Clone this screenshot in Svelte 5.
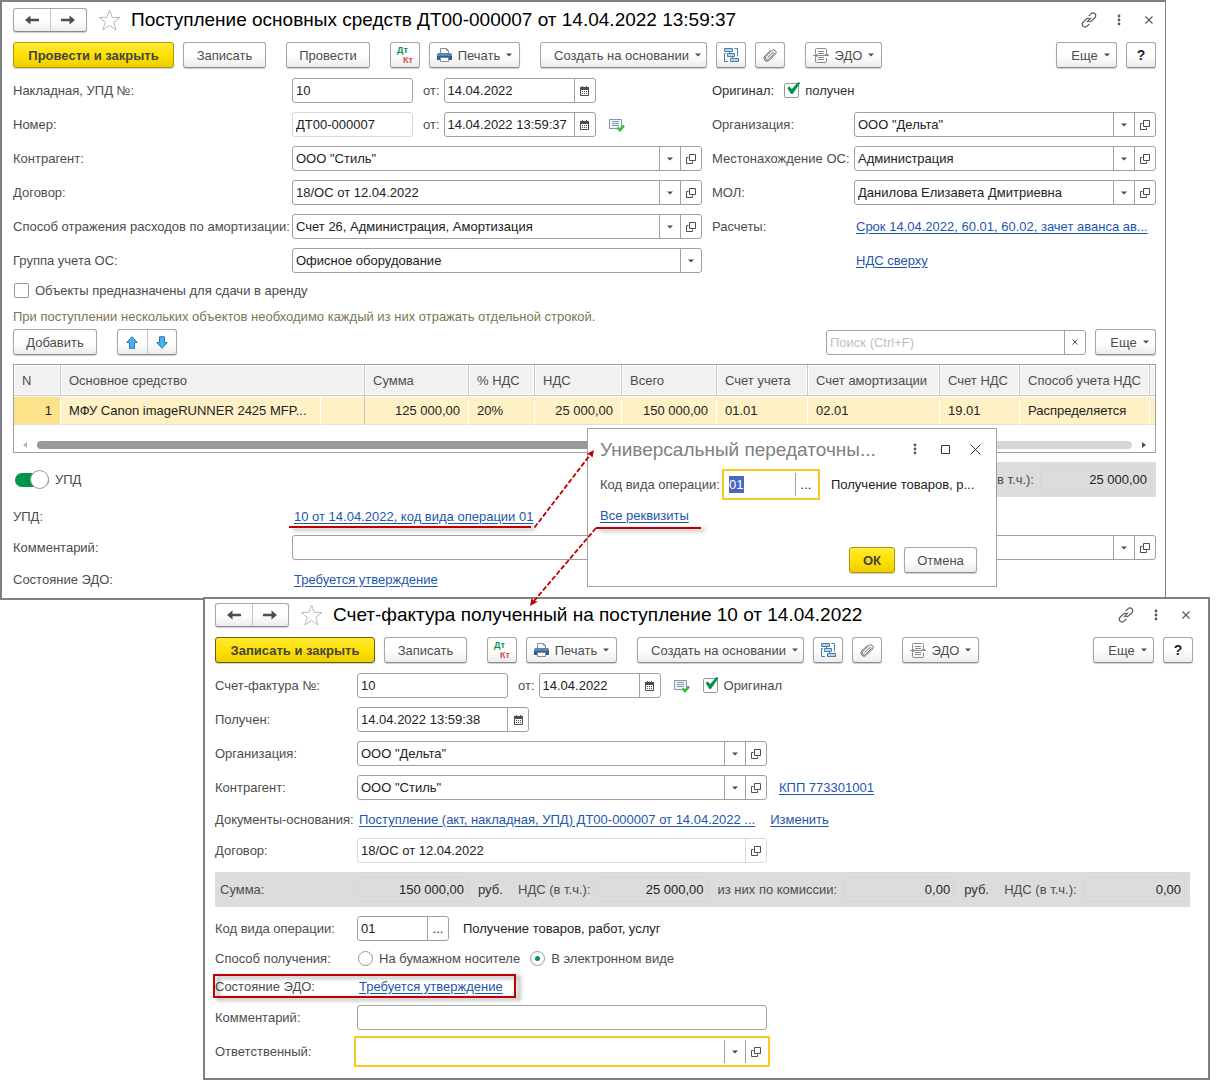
<script>
	const columns = [
		{ title: 'N', span: 1 },
		{ title: 'Основное средство', span: 2 },
		{ title: 'Сумма', span: 1 },
		{ title: '% НДС', span: 1 },
		{ title: 'НДС', span: 1 },
		{ title: 'Всего', span: 1 },
		{ title: 'Счет учета', span: 1 },
		{ title: 'Счет амортизации', span: 1 },
		{ title: 'Счет НДС', span: 1 },
		{ title: 'Способ учета НДС', span: 1 },
		{ title: '', span: 1 }
	];

	const rows = [
		[
			{ text: '1', kind: 'num current' },
			{ text: 'МФУ Canon imageRUNNER 2425 MFP...' },
			{ text: '', kind: 'fixed' },
			{ text: '125 000,00', kind: 'num' },
			{ text: '20%' },
			{ text: '25 000,00', kind: 'num' },
			{ text: '150 000,00', kind: 'num' },
			{ text: '01.01' },
			{ text: '02.01' },
			{ text: '19.01' },
			{ text: 'Распределяется' },
			{ text: '' }
		]
	];

	let comment = $state('');
	let invoiceComment = $state('');
	let responsible = $state('');
	let search = $state('');
	let received = $state(true);
	let original = $state(true);
	let forRent = $state(false);
	let upd = $state(true);
	let delivery = $state('electronic');
</script>

{#snippet caret()}
	<svg class="caret" width="6" height="4" viewBox="0 0 6 4" aria-hidden="true">
		<path d="M0 0.5h6L3 3.5z" fill="#4d4d4d" />
	</svg>
{/snippet}

{#snippet openIcon()}
	<svg width="10" height="10" viewBox="0 0 10 10" fill="none" stroke="#4d4d4d" aria-hidden="true">
		<path d="M3.5 0.5h6v6h-6z" />
		<path d="M2.5 3.5h-2v6h6v-2" />
	</svg>
{/snippet}

{#snippet calendarIcon()}
	<svg width="9" height="10" viewBox="0 0 9 10" aria-hidden="true">
		<path d="M0.5 2.5h8v7h-8z" fill="#fff" stroke="#4d4d4d" />
		<path d="M0 1h9v3H0z" fill="#4d4d4d" />
		<path d="M2 0h1v2H2zM6 0h1v2H6z" fill="#4d4d4d" />
		<path d="M2 5.5h6M2 7.5h6" stroke="#4d4d4d" stroke-dasharray="1 1" />
	</svg>
{/snippet}

{#snippet checkedDoc()}
	<svg class="doc-ok" width="16" height="14" viewBox="0 0 16 14" aria-hidden="true">
		<path d="M0.5 1.5h12v9H0.5z" fill="#f4f7fa" stroke="#8296ab" />
		<path d="M3 3.5h7M3 5.5h7M3 7.5h7" stroke="#8296ab" />
		<path d="M8.5 9.5l2.5 2.5 4-4.5" fill="none" stroke="#2fc13a" stroke-width="2.6" />
	</svg>
{/snippet}

{#snippet titleBar(text)}
	<header class="title-bar">
		<div class="pair nav">
			<button type="button" aria-label="Назад">
				<svg width="14" height="10" viewBox="0 0 14 10" aria-hidden="true">
					<path d="M0 5l5.5-4.5v3.3H14v2.4H5.5v3.3z" fill="#4d4d4d" />
				</svg>
			</button>
			<button type="button" aria-label="Вперед">
				<svg width="14" height="10" viewBox="0 0 14 10" aria-hidden="true">
					<path d="M14 5L8.5 0.5v3.3H0v2.4h8.5v3.3z" fill="#4d4d4d" />
				</svg>
			</button>
		</div>
		<button type="button" class="plain star" aria-label="В избранное">
			<svg width="23" height="22" viewBox="0 0 23 22" aria-hidden="true">
				<path d="M11.5 1l2.7 7.4h7.8l-6.2 4.9 2.3 7.7-6.6-4.6-6.6 4.6 2.3-7.7L1 8.4h7.8z" fill="none" stroke="#b4bac0" />
			</svg>
		</button>
		<h1>{text}</h1>
		<button type="button" class="plain" aria-label="Ссылка">
			<svg width="16" height="16" viewBox="0 0 16 16" fill="none" stroke="#5a5a5a" stroke-width="1.2" aria-hidden="true">
				<path d="M7.5 4.2l2.4-2.4a2.7 2.7 0 0 1 4 0 2.7 2.7 0 0 1 0 4L11 8.7a2.7 2.7 0 0 1-3.5.3" />
				<path d="M8.5 11.8l-2.4 2.4a2.7 2.7 0 0 1-4 0 2.7 2.7 0 0 1 0-4L5 7.3A2.7 2.7 0 0 1 8.5 7" />
				<path d="M5.8 10.2l4.4-4.4" />
			</svg>
		</button>
		<button type="button" class="plain" aria-label="Меню">
			<svg width="4" height="12" viewBox="0 0 4 12" fill="#5a5a5a" aria-hidden="true">
				<circle cx="2" cy="2" r="1.4" /><circle cx="2" cy="6" r="1.4" /><circle cx="2" cy="10" r="1.4" />
			</svg>
		</button>
		<button type="button" class="plain" aria-label="Закрыть">
			<svg width="8" height="8" viewBox="0 0 8 8" stroke="#5a5a5a" stroke-width="1.2" aria-hidden="true">
				<path d="M0.5 0.5l7 7M7.5 0.5l-7 7" />
			</svg>
		</button>
	</header>
{/snippet}

{#snippet commonTools()}
	<div class="group">
		<button type="button" class="btn icon" aria-label="Движения документа">
			<span class="dtkt"><b class="dt">Дт</b><b class="kt">Кт</b></span>
		</button>
		<button type="button" class="btn print">
			<svg width="15" height="14" viewBox="0 0 15 14" aria-hidden="true">
				<path d="M3.5 5.5v-5h6l2 2v3" fill="#fff" stroke="#7a8fa3" />
				<path d="M9.5 0.5v2h2" fill="none" stroke="#7a8fa3" />
				<path d="M1.5 5h12A1.5 1.5 0 0 1 15 6.5V11a1 1 0 0 1-1 1H1a1 1 0 0 1-1-1V6.5A1.5 1.5 0 0 1 1.5 5z" fill="#5b89b0" />
				<path d="M0 8h15v3a1 1 0 0 1-1 1H1a1 1 0 0 1-1-1z" fill="#2e5f8c" />
				<path d="M3.5 9.5h8v4h-8z" fill="#fff" stroke="#7a8fa3" />
			</svg>
			<span>Печать</span>
			{@render caret()}
		</button>
	</div>
	<div class="group">
		<button type="button" class="btn base">
			<span>Создать на основании</span>
			{@render caret()}
		</button>
		<button type="button" class="btn icon" aria-label="Структура подчиненности">
			<svg width="15" height="15" viewBox="0 0 15 15" aria-hidden="true">
				<g fill="#b9d2e6" stroke="#4580ad">
					<path d="M0.5 0.5h8v3h-8zM3.5 5.5h7v3h-7zM6.5 10.5h8v3h-8z" />
				</g>
				<path d="M10.5 0.5h3V8.5M4 13.5H0.5V5.5H2M5.5 3.5v2M8.5 8.5v2" fill="none" stroke="#4580ad" />
			</svg>
		</button>
		<button type="button" class="btn icon" aria-label="Присоединенные файлы">
			<svg width="14" height="14" viewBox="0 0 14 14" fill="none" stroke="#6a6a6a" aria-hidden="true">
				<path d="M4.5 9.8l5-5a0.9 0.9 0 0 1 1.3 1.3L5.6 11.3a1.9 1.9 0 0 1-2.8-2.7L8.8 2.6a2.5 2.5 0 0 1 3.6 3.6l-6 6a3 3 0 0 1-4.5 0 3 3 0 0 1 0-4.3L7.5 2.2" />
			</svg>
		</button>
	</div>
	<button type="button" class="btn edo">
		<svg width="16" height="15" viewBox="0 0 16 15" fill="none" stroke="#8a8a8a" aria-hidden="true">
			<path d="M2.5 5V1.5a1 1 0 0 1 1-1h9a1 1 0 0 1 1 1V5M2.5 10v3.5a1 1 0 0 0 1 1h9a1 1 0 0 0 1-1V10" />
			<path d="M5 3.5h6M5 5.5h6M5 9.5h6M5 11.5h6" />
			<path d="M0 7.5h16" />
			<path d="M2 5l3.5 2.5L2 10zM16 7.5h-5l2.5-2.5z" fill="#8a8a8a" stroke="none" />
		</svg>
		<span>ЭДО</span>
		{@render caret()}
	</button>
	<div class="group end">
		<button type="button" class="btn more"><span>Еще</span>{@render caret()}</button>
		<button type="button" class="btn icon help" aria-label="Справка">?</button>
	</div>
{/snippet}

{#snippet combo(id, label, value, open = true)}
	<div class="row">
		<label for={id}>{label}</label>
		<div class="field grow">
			<select {id}><option>{value}</option></select>
			<span class="seg">{@render caret()}</span>
			{#if open}
				<button type="button" class="seg" aria-label="Открыть">{@render openIcon()}</button>
			{/if}
		</div>
	</div>
{/snippet}

{#snippet dateField(id, value, size)}
	<div class="field {size}">
		<input {id} type="text" {value} />
		<button type="button" class="seg" aria-label="Календарь">{@render calendarIcon()}</button>
	</div>
{/snippet}

<div class="desktop">
	<main class="window receipt">
		{@render titleBar('Поступление основных средств ДТ00-000007 от 14.04.2022 13:59:37')}

		<div class="toolbar">
			<div class="group">
				<button type="button" class="btn primary">Провести и закрыть</button>
				<button type="button" class="btn save">Записать</button>
			</div>
			<button type="button" class="btn post">Провести</button>
			{@render commonTools()}
		</div>

		<div class="columns">
			<div class="stack">
				<div class="row">
					<label for="waybill">Накладная, УПД №:</label>
					<div class="field number"><input id="waybill" type="text" value="10" /></div>
					<label class="from" for="waybill-date">от:</label>
					{@render dateField('waybill-date', '14.04.2022', 'datetime')}
				</div>
				<div class="row">
					<label for="doc-number">Номер:</label>
					<div class="field number readonly">
						<input id="doc-number" type="text" value="ДТ00-000007" readonly />
					</div>
					<label class="from" for="doc-date">от:</label>
					{@render dateField('doc-date', '14.04.2022 13:59:37', 'datetime')}
					{@render checkedDoc()}
				</div>
				{@render combo('partner', 'Контрагент:', 'ООО "Стиль"')}
				{@render combo('contract', 'Договор:', '18/ОС от 12.04.2022')}
				{@render combo('expense', 'Способ отражения расходов по амортизации:', 'Счет 26, Администрация, Амортизация')}
				{@render combo('asset-group', 'Группа учета ОС:', 'Офисное оборудование', false)}
			</div>

			<div class="stack right">
				<div class="row dark">
					<span>Оригинал:</span>
					<label class="check">
						<input type="checkbox" bind:checked={received} />получен
					</label>
				</div>
				{@render combo('org', 'Организация:', 'ООО "Дельта"')}
				{@render combo('place', 'Местонахождение ОС:', 'Администрация')}
				{@render combo('mol', 'МОЛ:', 'Данилова Елизавета Дмитриевна')}
				<div class="row">
					<span class="label">Расчеты:</span>
					<a href="#payments">Срок 14.04.2022, 60.01, 60.02, зачет аванса ав...</a>
				</div>
				<div class="row">
					<span class="label"></span>
					<a href="#vat">НДС сверху</a>
				</div>
			</div>
		</div>

		<label class="check line">
			<input type="checkbox" bind:checked={forRent} />Объекты предназначены для сдачи в аренду
		</label>
		<p class="hint">При поступлении нескольких объектов необходимо каждый из них отражать отдельной строкой.</p>

		<div class="commands">
			<button type="button" class="btn post">Добавить</button>
			<div class="pair order">
				<button type="button" aria-label="Вверх">
					<svg width="12" height="13" viewBox="0 0 12 13" aria-hidden="true">
						<path d="M6 0.7l5.3 5.8H8.5v5.8h-5V6.5H0.7z" fill="#45b1f0" stroke="#2b7db0" />
					</svg>
				</button>
				<button type="button" aria-label="Вниз">
					<svg width="12" height="13" viewBox="0 0 12 13" aria-hidden="true">
						<path d="M6 12.3l5.3-5.8H8.5V0.7h-5v5.8H0.7z" fill="#45b1f0" stroke="#2b7db0" />
					</svg>
				</button>
			</div>
			<div class="field search">
				<input type="text" placeholder="Поиск (Ctrl+F)" aria-label="Поиск" bind:value={search} />
				<button type="button" class="seg" aria-label="Очистить">
					<svg width="6" height="6" viewBox="0 0 6 6" stroke="#4d4d4d" aria-hidden="true">
						<path d="M0.5 0.5l5 5M5.5 0.5l-5 5" />
					</svg>
				</button>
			</div>
			<button type="button" class="btn more"><span>Еще</span>{@render caret()}</button>
		</div>

		<div class="grid">
			<table>
				<colgroup>
					<col class="w-n" /><col /><col class="w-sub" /><col class="w-sum" /><col class="w-rate" />
					<col class="w-vat" /><col class="w-total" /><col class="w-acc" /><col class="w-amort" />
					<col class="w-vatacc" /><col class="w-mode" /><col class="w-rest" />
				</colgroup>
				<thead>
					<tr>
						{#each columns as column}
							<th colspan={column.span}>{column.title}</th>
						{/each}
					</tr>
				</thead>
				<tbody>
					{#each rows as row}
						<tr>
							{#each row as cell}
								<td class={cell.kind}>{cell.text}</td>
							{/each}
						</tr>
					{/each}
				</tbody>
			</table>
			<div class="scroll">
				<svg width="4" height="6" viewBox="0 0 4 6" aria-hidden="true"><path d="M4 0v6L0 3z" fill="#b4b4b4" /></svg>
				<div class="track"><div class="thumb"></div></div>
				<svg width="4" height="6" viewBox="0 0 4 6" aria-hidden="true"><path d="M0 0v6l4-3z" fill="#4d4d4d" /></svg>
			</div>
		</div>

		<div class="summary">
			<label class="switch"><input type="checkbox" role="switch" bind:checked={upd} />УПД</label>
			<div class="band">
				<div class="total">
					<label for="vat-total">(в т.ч.):</label>
					<input id="vat-total" type="text" value="25 000,00" readonly />
				</div>
			</div>
		</div>

		<div class="stack">
			<div class="row link">
				<span class="label">УПД:</span>
				<a href="#upd">10 от 14.04.2022, код вида операции 01</a>
			</div>
			<div class="row">
				<label for="comment">Комментарий:</label>
				<div class="field grow">
					<input id="comment" type="text" bind:value={comment} />
					<button type="button" class="seg" aria-label="Выбрать">{@render caret()}</button>
					<button type="button" class="seg" aria-label="Открыть">{@render openIcon()}</button>
				</div>
			</div>
			<div class="row link">
				<span class="label">Состояние ЭДО:</span>
				<a href="#edo">Требуется утверждение</a>
			</div>
		</div>
	</main>

	<section class="window invoice">
		{@render titleBar('Счет-фактура полученный на поступление 10 от 14.04.2022')}

		<div class="toolbar">
			<div class="group">
				<button type="button" class="btn primary active">Записать и закрыть</button>
				<button type="button" class="btn save">Записать</button>
			</div>
			{@render commonTools()}
		</div>

		<div class="stack">
			<div class="row">
				<label for="invoice">Счет-фактура №:</label>
				<div class="field long"><input id="invoice" type="text" value="10" /></div>
				<label class="from" for="invoice-date">от:</label>
				{@render dateField('invoice-date', '14.04.2022', 'date')}
				{@render checkedDoc()}
				<label class="check original">
					<input type="checkbox" bind:checked={original} />Оригинал
				</label>
			</div>
			<div class="row">
				<label for="received-date">Получен:</label>
				{@render dateField('received-date', '14.04.2022 13:59:38', 'stamp')}
			</div>
			{@render combo('inv-org', 'Организация:', 'ООО "Дельта"')}
			<div class="with-link">
				{@render combo('inv-partner', 'Контрагент:', 'ООО "Стиль"')}
				<a href="#kpp">КПП 773301001</a>
			</div>
			<div class="row link">
				<span class="label">Документы-основания:</span>
				<a class="basis" href="#basis">Поступление (акт, накладная, УПД) ДТ00-000007 от 14.04.2022 ...</a>
				<a href="#change">Изменить</a>
			</div>
			<div class="row">
				<label for="inv-contract">Договор:</label>
				<div class="field grow readonly">
					<input id="inv-contract" type="text" value="18/ОС от 12.04.2022" readonly />
					<button type="button" class="seg" aria-label="Открыть">{@render openIcon()}</button>
				</div>
			</div>
			<div class="band totals">
				<div class="total first">
					<label for="sum">Сумма:</label>
					<input id="sum" type="text" value="150 000,00" readonly />
				</div>
				<span class="unit">руб.</span>
				<div class="total">
					<label for="sum-vat">НДС (в т.ч.):</label>
					<input id="sum-vat" type="text" value="25 000,00" readonly />
				</div>
				<div class="total">
					<label for="commission">из них по комиссии:</label>
					<input id="commission" type="text" value="0,00" readonly />
				</div>
				<span class="unit">руб.</span>
				<div class="total last">
					<label for="commission-vat">НДС (в т.ч.):</label>
					<input id="commission-vat" type="text" value="0,00" readonly />
				</div>
			</div>
			<div class="row">
				<label for="inv-code">Код вида операции:</label>
				<div class="field code">
					<input id="inv-code" type="text" value="01" />
					<button type="button" class="seg" aria-label="Выбрать код">...</button>
				</div>
				<span class="note">Получение товаров, работ, услуг</span>
			</div>
			<div class="row radios" role="radiogroup" aria-label="Способ получения">
				<span class="label">Способ получения:</span>
				<label class="check"><input type="radio" value="paper" bind:group={delivery} />На бумажном носителе</label>
				<label class="check"><input type="radio" value="electronic" bind:group={delivery} />В электронном виде</label>
			</div>
			<div class="row link">
				<span class="label">Состояние ЭДО:</span>
				<a href="#inv-edo">Требуется утверждение</a>
			</div>
			<div class="row">
				<label for="inv-comment">Комментарий:</label>
				<div class="field grow"><input id="inv-comment" type="text" bind:value={invoiceComment} /></div>
			</div>
			<div class="row">
				<label for="responsible">Ответственный:</label>
				<div class="field grow focused">
					<input id="responsible" type="text" bind:value={responsible} />
					<button type="button" class="seg" aria-label="Выбрать">{@render caret()}</button>
					<button type="button" class="seg" aria-label="Открыть">{@render openIcon()}</button>
				</div>
			</div>
		</div>
	</section>

	<section class="dialog" role="dialog" aria-labelledby="dialog-title">
		<header>
			<h2 id="dialog-title">Универсальный передаточны...</h2>
			<button type="button" class="plain" aria-label="Меню">
				<svg width="4" height="12" viewBox="0 0 4 12" fill="#5a5a5a" aria-hidden="true">
					<circle cx="2" cy="2" r="1.4" /><circle cx="2" cy="6" r="1.4" /><circle cx="2" cy="10" r="1.4" />
				</svg>
			</button>
			<button type="button" class="plain" aria-label="Развернуть">
				<svg width="9" height="9" viewBox="0 0 9 9" aria-hidden="true">
					<path d="M0.5 0.5h8v8h-8z" fill="none" stroke="#333" />
				</svg>
			</button>
			<button type="button" class="plain" aria-label="Закрыть">
				<svg width="11" height="11" viewBox="0 0 11 11" stroke="#333" aria-hidden="true">
					<path d="M0.5 0.5l10 10M10.5 0.5l-10 10" />
				</svg>
			</button>
		</header>
		<div class="row">
			<label for="code">Код вида операции:</label>
			<div class="field code focused">
				<span class="picked"><input id="code" type="text" value="01" /></span>
				<button type="button" class="seg" aria-label="Выбрать код">...</button>
			</div>
			<span class="note">Получение товаров, р...</span>
		</div>
		<a href="#all">Все реквизиты</a>
		<footer>
			<button type="button" class="btn primary ok">ОК</button>
			<button type="button" class="btn cancel">Отмена</button>
		</footer>
	</section>

	<!-- callouts linking the three windows -->
	<svg class="callouts" width="720" height="1010" viewBox="0 0 720 1010" aria-hidden="true">
		<defs>
			<filter id="shade" x="-10%" y="-300%" width="120%" height="800%">
				<feDropShadow dx="4" dy="2" stdDeviation="2" flood-opacity="0.4" />
			</filter>
			<filter id="box-shade" x="-5%" y="-30%" width="112%" height="170%">
				<feDropShadow dx="4" dy="2" stdDeviation="2" flood-opacity="0.45" />
			</filter>
		</defs>
		<g fill="#c00000">
			<path d="M289 526h242v2H289z" filter="url(#shade)" />
			<path d="M596 527h105v2H596z" filter="url(#shade)" />
			<path d="M594 450l-1.5 7.5-2.5-2.5-3.5-1z" />
			<path d="M530 606l1.5-8 2.5 3 4 .5z" />
		</g>
		<g fill="none" stroke="#c00000" stroke-width="1.8" stroke-dasharray="5 2">
			<path d="M534.5 527.5L590 455" />
			<path d="M596 528L534 601" />
		</g>
		<path d="M214 975h301v22H214z" fill="none" stroke="#c00000" stroke-width="2" filter="url(#box-shade)" />
	</svg>
</div>

<style>
	:global(body) {
		margin: 0;
		background: #fff;
	}

	.desktop {
		position: relative;
		font-family: 'Liberation Sans', Arial, sans-serif;
		font-size: 13px;
		line-height: 17px;
		color: #4d4d4d;
	}

	.desktop :is(button, input, select) {
		box-sizing: border-box;
		margin: 0;
		font: inherit;
		color: inherit;
	}

	.window {
		border: 2px solid #808080;
		background: #fff;
	}

	.receipt {
		margin-right: 52px;
		padding: 6px 9px 9px 11px;
		border-right-width: 1px;
	}

	.invoice {
		position: relative;
		margin: -3px 8px 0 203px;
		padding: 4px 15px 14px 10px;
	}

	a {
		color: #1d56ae;
		text-decoration: underline;
		text-underline-offset: 2px;
		white-space: nowrap;
	}

	/* title bar */
	.title-bar {
		display: flex;
		align-items: center;
		height: 24px;
		margin-bottom: 10px;
	}

	h1 {
		flex: 1;
		margin: 0 0 0 10px;
		font-size: 19px;
		font-weight: normal;
		line-height: 24px;
		color: #000;
		white-space: nowrap;
	}

	.plain {
		display: flex;
		align-items: center;
		justify-content: center;
		width: 30px;
		height: 24px;
		padding: 0;
		border: 0;
		background: none;
	}

	.title-bar .plain:last-child {
		margin-right: -8px;
	}

	.title-bar .star {
		width: 24px;
		margin-left: 10px;
	}

	.pair {
		display: flex;
		border: 1px solid #a6a6a6;
		border-bottom-color: #8c8c8c;
		border-radius: 3px;
		background: linear-gradient(#fff 50%, #ececec);
		box-shadow: 0 1px 1px #ccc;
	}

	.pair button {
		display: flex;
		flex: 1;
		align-items: center;
		justify-content: center;
		padding: 0;
		border: 0;
		background: none;
	}

	.pair button + button {
		border-left: 1px solid #c4c4c4;
	}

	.nav {
		width: 72px;
		height: 22px;
	}

	.order {
		width: 58px;
		height: 24px;
		margin-left: 20px;
	}

	/* buttons */
	.toolbar {
		display: flex;
		gap: 20px;
		margin-bottom: 10px;
	}

	.group {
		display: flex;
		gap: 9px;
	}

	.end {
		margin-left: auto;
	}

	.btn {
		display: flex;
		flex: none;
		align-items: center;
		justify-content: center;
		gap: 6px;
		height: 26px;
		padding: 0;
		border: 1px solid #a6a6a6;
		border-bottom-color: #8c8c8c;
		border-radius: 3px;
		background: linear-gradient(#fff 50%, #ececec);
		box-shadow: 0 1px 1px #ccc;
		white-space: nowrap;
	}

	.desktop .primary {
		width: 161px;
		border-color: #ad9a00;
		background: linear-gradient(#ffea3d, #ffe000 50%, #edcf00);
		font-weight: bold;
		color: #444;
	}

	.desktop .active {
		width: 160px;
		border-color: #6e6200;
	}

	.save {
		width: 83px;
	}

	.post {
		width: 84px;
	}

	.icon {
		width: 30px;
	}

	.print {
		width: 91px;
	}

	.base {
		width: 167px;
		padding-left: 8px;
	}

	.edo {
		width: 77px;
	}

	.more {
		width: 61px;
		padding-left: 8px;
	}

	.desktop .help {
		font-size: 14px;
		font-weight: bold;
		color: #222;
	}

	.dtkt {
		display: flex;
		flex-direction: column;
		width: 16px;
		font-size: 9px;
		line-height: 10px;
	}

	.dt {
		align-self: flex-start;
		color: #009646;
	}

	.kt {
		align-self: flex-end;
		color: #e04848;
	}

	/* form */
	.columns {
		display: grid;
		grid-template-columns: minmax(0, 689fr) minmax(0, 444fr);
		gap: 10px;
	}

	.stack {
		display: flex;
		flex-direction: column;
		gap: 9px;
	}

	.row {
		display: flex;
		align-items: center;
		height: 25px;
		white-space: nowrap;
	}

	.row.link {
		height: 20px;
	}

	.row > :is(label, .label):first-child {
		flex: none;
		width: 279px;
	}

	.right .row > :is(label, .label):first-child,
	.invoice .row > :is(label, .label):first-child {
		width: 142px;
	}

	.row > a {
		margin-left: 2px;
	}

	.row .from {
		margin: 0 4px 0 10px;
	}

	.dark {
		gap: 10px;
		color: #333;
	}

	.field {
		display: flex;
		box-sizing: border-box;
		height: 25px;
		border: 1px solid #a0a0a0;
		border-radius: 3px;
		background: #fff;
		color: #222;
	}

	.grow {
		flex: 1;
		min-width: 0;
	}

	.field :is(input, select) {
		flex: 1;
		min-width: 0;
		width: 100%;
		padding: 0 3px;
		border: 0;
		outline: 0;
		background: none;
		appearance: none;
	}

	.seg {
		display: flex;
		flex: none;
		box-sizing: border-box;
		align-items: center;
		justify-content: center;
		width: 21px;
		padding: 0;
		border: 0;
		border-left: 1px solid #a0a0a0;
		background: none;
	}

	.readonly {
		border-color: #d9d9d9;
	}

	.readonly .seg {
		border-color: #d9d9d9;
	}

	.focused {
		border-color: #fff;
		outline: 2px solid #fbca1c;
		outline-offset: 1px;
		border-radius: 0;
	}

	.number {
		width: 121px;
	}

	.datetime {
		width: 152px;
	}

	.date {
		width: 122px;
	}

	.long {
		width: 151px;
	}

	.stamp {
		width: 172px;
	}

	.code {
		width: 92px;
	}

	.note {
		margin-left: 14px;
		color: #222;
	}

	.doc-ok {
		margin-left: 13px;
	}

	.check {
		display: flex;
		align-items: center;
		gap: 6px;
	}

	.check input {
		position: relative;
		width: 15px;
		height: 15px;
		border: 1px solid #999;
		border-radius: 2px;
		background: #fff;
		appearance: none;
	}

	.check input[type='checkbox']:checked::after {
		content: '';
		position: absolute;
		top: -2px;
		left: 2px;
		width: 13px;
		height: 12px;
		background: #009646;
		clip-path: polygon(0 50%, 16% 38%, 36% 58%, 84% 0, 100% 8%, 42% 100%, 30% 100%);
	}

	.check input[type='radio'] {
		border-radius: 50%;
	}

	.check input[type='radio']:checked {
		background: radial-gradient(circle, #009646 2px, #fff 3px);
	}

	.original {
		margin-left: 13px;
	}

	.line {
		height: 17px;
		margin: 9px 0;
		padding-left: 1px;
	}

	.hint {
		margin: 0 0 4px;
		color: #7b7650;
	}

	.commands {
		display: flex;
		align-items: center;
		margin-bottom: 9px;
	}

	.search {
		width: 260px;
		margin: 0 9px 0 auto;
	}

	.search input::placeholder {
		color: #bfbfbf;
	}

	/* table */
	.grid {
		border: 1px solid #a0a0a0;
	}

	table {
		width: 100%;
		border-collapse: separate;
		border-spacing: 0;
		table-layout: fixed;
	}

	th,
	td {
		box-sizing: border-box;
		padding: 0 8px;
		overflow: hidden;
		white-space: nowrap;
		text-align: left;
	}

	th {
		height: 31px;
		padding-right: 0;
		border-right: 1px solid #c6c6c6;
		border-bottom: 1px solid #c6c6c6;
		background: #f1f1f1;
		font-weight: normal;
		box-shadow: inset 0 0 0 1px #fff;
	}

	td {
		height: 29px;
		border-top: 1px solid #fff;
		border-right: 1px solid #fff;
		border-bottom: 1px solid #e0e0e0;
		background: #fff1c6;
		color: #222;
	}

	:is(th, td):last-child {
		padding: 0;
		border-right: 0;
	}

	.num {
		text-align: right;
	}

	.current {
		background: #fde28a;
	}

	.fixed {
		border-right-color: #c6c6c6;
	}

	.w-n {
		width: 47px;
	}

	.w-sub {
		width: 44px;
	}

	.w-sum {
		width: 104px;
	}

	.w-rate {
		width: 66px;
	}

	.w-vat {
		width: 87px;
	}

	.w-total {
		width: 95px;
	}

	.w-acc {
		width: 91px;
	}

	.w-amort {
		width: 132px;
	}

	.w-vatacc {
		width: 80px;
	}

	.w-mode {
		width: 130px;
	}

	.w-rest {
		width: 5px;
	}

	.scroll {
		display: flex;
		align-items: center;
		gap: 10px;
		height: 15px;
		padding: 12px 9px 0;
	}

	.track {
		flex: 1;
		border-radius: 4px;
		background: #d6d6d6;
	}

	.thumb {
		width: 75%;
		height: 8px;
		border-radius: 4px;
		background: #999;
	}

	/* totals */
	.summary {
		display: flex;
		align-items: center;
		justify-content: space-between;
		margin: 9px 0;
	}

	.switch {
		display: flex;
		align-items: center;
		gap: 6px;
		padding-left: 2px;
	}

	.switch input {
		display: flex;
		align-items: center;
		width: 34px;
		height: 14px;
		border-radius: 7px;
		background: #aaa;
		appearance: none;
	}

	.switch input:checked {
		justify-content: flex-end;
		background: #009646;
	}

	.switch input::before {
		content: '';
		width: 17px;
		height: 17px;
		border: 1px solid #999;
		border-radius: 50%;
		background: #fff;
	}

	.band {
		display: flex;
		box-sizing: border-box;
		align-items: center;
		justify-content: flex-end;
		width: 444px;
		height: 35px;
		padding: 0 5px;
		background: #dcdcdc;
		white-space: nowrap;
	}

	.totals {
		gap: 10px;
		width: auto;
		margin-right: 3px;
	}

	.total {
		display: flex;
		align-items: center;
		gap: 6px;
	}

	.total input {
		width: 111px;
		height: 25px;
		padding: 0 3px;
		border: 1px solid #d6d6d6;
		border-radius: 3px;
		background: none;
		color: #222;
		text-align: right;
	}

	.first {
		gap: 0;
	}

	.first label {
		width: 137px;
	}

	.last,
	.last input {
		flex: 1;
		min-width: 0;
	}

	.unit {
		width: 30px;
		color: #333;
	}

	/* invoice fields share one width, the links follow them */
	.invoice .row .grow {
		flex: 0 1 410px;
	}

	.with-link {
		display: flex;
		align-items: center;
		gap: 12px;
	}

	.with-link .row {
		flex: 0 1 552px;
	}

	.basis {
		margin-right: 13px;
	}

	.invoice .radios {
		height: 17px;
	}

	.radios .check {
		margin: 0 9px 0 1px;
	}

	/* dialog */
	.dialog {
		position: absolute;
		top: 428px;
		left: 587px;
		box-sizing: border-box;
		width: 410px;
		padding: 10px 19px 13px 12px;
		border: 1px solid #a0a0a0;
		background: #fff;
	}

	.dialog header {
		display: flex;
		margin: 0 -13px 11px 0;
	}

	.dialog .plain {
		height: 20px;
	}

	h2 {
		flex: 1;
		margin: 0;
		font-size: 19px;
		font-weight: normal;
		line-height: 22px;
		color: #808080;
		white-space: nowrap;
	}

	.dialog .row {
		margin-bottom: 10px;
	}

	.dialog .row > label:first-child {
		width: 125px;
	}

	.picked {
		display: flex;
		flex: 1;
		align-items: center;
		padding-left: 3px;
	}

	.desktop .picked input {
		flex: none;
		width: 15px;
		padding: 0;
		background: #4a66c0;
		color: #fff;
	}

	.dialog footer {
		display: flex;
		justify-content: flex-end;
		gap: 9px;
		margin-top: 23px;
	}

	.desktop .ok {
		width: 46px;
	}

	.cancel {
		width: 73px;
	}

	.callouts {
		position: absolute;
		top: 0;
		left: 0;
		pointer-events: none;
	}
</style>
